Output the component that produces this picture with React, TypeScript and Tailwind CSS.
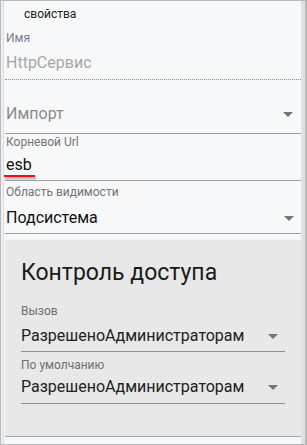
import React from 'react'

function Arrow({ className = '' }: { className?: string }) {
  return (
    <svg width="10" height="5" viewBox="0 0 10 5" className={className}>
      <path d="M0 0h10L5 5z" fill="#757575" />
    </svg>
  )
}

export default function App() {
  return (
    <div
      className="flex h-[445px] w-[307px] border-y border-l border-r-2 border-[#b9b9b9] bg-[#f6f8fa] text-[#212121]"
      style={{ fontFamily: 'Roboto, "Noto Sans", sans-serif' }}
    >
      <div className="w-[3px] border-r border-[#d9dee5] bg-[#eef0f2]" />
      <div className="flex flex-1 flex-col pl-px">
        <div className="h-[29px] pl-[19px] pt-[6px] text-[12px] leading-[14px] text-[#222]">свойства</div>

        {/* Имя */}
        <div className="border-b border-dotted border-[#8a8a8a] pb-[6px] pl-px pt-[1px]">
          <div className="h-[14px] text-[12px] leading-[14px] text-[#7b7d8e]">Имя</div>
          <div className="mt-[8px] h-[20px] text-[16px] leading-[20px] text-[#a7a7a7]">HttpСервис</div>
        </div>

        {/* Импорт */}
        <div className="flex items-center border-b border-[#9e9e9e] pb-[9px] pl-px pr-[8px] pt-[24px]">
          <div className="h-[20px] flex-1 text-[16px] leading-[20px] text-[#8c8c8c]">Импорт</div>
          <Arrow />
        </div>

        {/* Корневой Url */}
        <div className="border-b border-[#9e9e9e] pb-[5px] pl-px pt-px">
          <div className="h-[14px] text-[12px] leading-[14px] text-[#757575]">Корневой Url</div>
          <div className="relative mt-[6px] h-[20px] text-[16px] leading-[20px] text-[#111]">
            esb
            <span className="absolute left-[-2px] top-[20px] h-[2px] w-[31px] bg-[#e8121b] shadow-[1px_2px_2px_rgba(0,0,0,0.35)]" />
          </div>
        </div>

        {/* Область видимости */}
        <div className="flex flex-col border-b border-[#9e9e9e] pb-[5px] pl-px pt-[4px]">
          <div className="h-[14px] text-[12px] leading-[14px] text-[#757575]">Область видимости</div>
          <div className="mt-[9px] flex h-[20px] items-center pr-[7px]">
            <div className="flex-1 text-[16px] leading-[20px] text-[#111]">Подсистема</div>
            <Arrow />
          </div>
        </div>

        {/* Контроль доступа */}
        <div className="mt-[6px] h-[197px] border-b border-[#a9a9a9] bg-[#e8e8e8] pl-[16px] pr-[16px] pt-[19px]">
          <div className="h-[28px] text-[23px] leading-[28px] text-[#1a1a1a]">Контроль доступа</div>
          <div className="mt-[17px] border-b border-[#8f8f8f] pb-[5px]">
            <div className="h-[14px] text-[12px] leading-[14px] text-[#6f6f6f]">Вызов</div>
            <div className="mt-[8px] flex h-[20px] items-center pr-[7px]">
              <div className="flex-1 text-[16px] leading-[20px]">РазрешеноАдминистраторам</div>
              <Arrow />
            </div>
          </div>
          <div className="border-b border-[#8f8f8f] pb-[6px] pt-[6px]">
            <div className="h-[14px] text-[12px] leading-[14px] text-[#6f6f6f]">По умолчанию</div>
            <div className="mt-[5px] flex h-[20px] items-center pr-[7px]">
              <div className="flex-1 text-[16px] leading-[20px]">РазрешеноАдминистраторам</div>
              <Arrow />
            </div>
          </div>
        </div>
      </div>
      <div className="w-[4px] bg-[#dfe1e4]" />
    </div>
  )
}
